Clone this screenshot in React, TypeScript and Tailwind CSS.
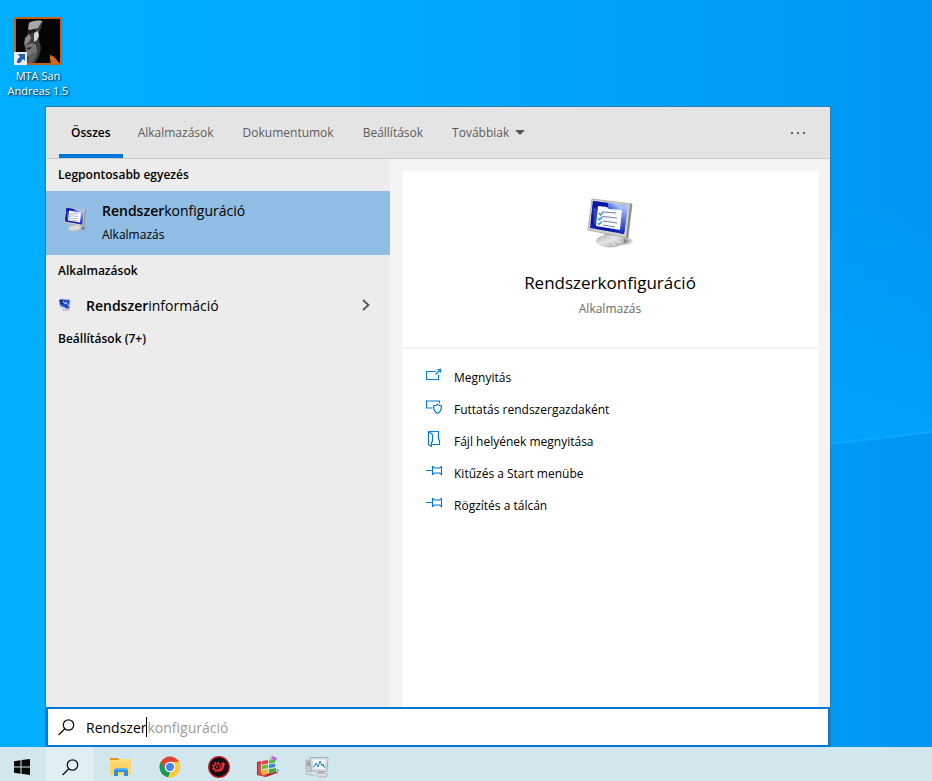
import type { ReactNode } from "react";

const TABS = ["Alkalmazások", "Dokumentumok", "Beállítások"];

const ACTIONS = [
  { label: "Megnyitás", icon: <OpenIcon /> },
  { label: "Futtatás rendszergazdaként", icon: <AdminIcon /> },
  { label: "Fájl helyének megnyitása", icon: <LocationIcon /> },
  { label: "Kitűzés a Start menübe", icon: <PinIcon /> },
  { label: "Rögzítés a tálcán", icon: <PinIcon /> },
];

const TASKBAR = [
  { label: "Start", icon: <WindowsLogo />, style: "w-[46px] pr-0.5" },
  { label: "Keresés", icon: <SearchIcon />, style: "mr-0.5 w-12 bg-[#dfeff4]" },
  { label: "Fájlkezelő", icon: <FolderIcon />, style: "w-[49px]" },
  { label: "Google Chrome", icon: <ChromeIcon />, style: "w-[49px]" },
  { label: "Driver Booster", icon: <BoosterIcon />, style: "w-[49px]" },
  { label: "Töredezettségmentesítés", icon: <BlocksIcon />, style: "w-[49px]" },
  { label: "Teljesítményfigyelő", icon: <MonitorGraphIcon />, style: "w-[49px]" },
];

function OpenIcon() {
  return (
    <svg width="16" height="16" viewBox="0 0 16 16" fill="none" stroke="#0078d7" strokeWidth="1.200">
      <path d="M9.500 4.500h-9v8h12v-5M9.500 7.500l5.500-5.500M11.500 2.500h3v3" />
    </svg>
  );
}

function AdminIcon() {
  return (
    <svg width="16" height="16" viewBox="0 0 16 16" fill="none" stroke="#0078d7" strokeWidth="1.200">
      <path d="M6.500 9H.5V2h13v2.500" />
      <path d="M11.500 5.500c-1.300 1-2.500 1.300-4 1.300 0 4 .8 6 4 7.700 3.200-1.700 4-3.700 4-7.700-1.500 0-2.700-.3-4-1.300Z" />
    </svg>
  );
}

function LocationIcon() {
  return (
    <svg width="16" height="16" viewBox="0 0 16 16" fill="none" stroke="#0078d7" strokeWidth="1.200">
      <path d="M2.500.5h10v8l1 1v4h-7M2.500.5v13l3 2v-4l1-1v-7l-4-3" />
    </svg>
  );
}

function PinIcon() {
  return (
    <svg width="16" height="16" viewBox="0 0 16 16" fill="none" stroke="#0078d7" strokeWidth="1.200">
      <path d="M0 7.500h6.500M6.500 3v9M6.500 3.500l2 1.500h5l2-1.500v8l-2-1.500h-5l-2 1.500" />
    </svg>
  );
}

function SearchIcon() {
  return (
    <svg width="17" height="17" viewBox="0 0 17 17" fill="none" stroke="#111" strokeWidth="1.300">
      <circle cx="10.500" cy="6" r="5.200" />
      <path d="M6.800 9.700.6 16" />
    </svg>
  );
}

function ConfigIcon({ size }: { size: number }) {
  return (
    <svg width={size} height={size} viewBox="0 0 50 52">
      <defs>
        <linearGradient id="screen" x1="0" y1="1" x2="1" y2="0">
          <stop offset="0" stopColor="#1a2fb4" />
          <stop offset="0.300" stopColor="#0513a6" />
          <stop offset="0.600" stopColor="#2346d2" />
          <stop offset="0.800" stopColor="#a9c4fb" />
          <stop offset="1" stopColor="#6f97f2" />
        </linearGradient>
        <linearGradient id="side" x1="0" y1="0" x2="0" y2="1">
          <stop offset="0" stopColor="#b9cffc" />
          <stop offset="1" stopColor="#0a1fb8" />
        </linearGradient>
        <linearGradient id="stand" x1="0" y1="0" x2="1" y2="1">
          <stop offset="0" stopColor="#a9a9a9" />
          <stop offset="0.450" stopColor="#e4e4e4" />
          <stop offset="1" stopColor="#9c9c9c" />
        </linearGradient>
        <radialGradient id="shade">
          <stop offset="0" stopColor="#555" />
          <stop offset="1" stopColor="#555" stopOpacity="0" />
        </radialGradient>
      </defs>
      <ellipse cx="37" cy="44" rx="12" ry="5" fill="url(#shade)" />
      <path d="M19 35l15 2-1 5H20Z" fill="#b5b5b5" />
      <ellipse cx="25" cy="44" rx="14" ry="6.500" fill="url(#stand)" />
      <path d="M28 42l8 4M26 43l4 6" stroke="#f5f5f5" />
      <path d="M7 2l40 5-4 34L3 33Z" fill="#d2d2cf" stroke="#a2a2a0" strokeWidth="0.800" />
      <path d="M45 7l2 .3-4 33.700-2-1Z" fill="#8c8c8a" />
      <path d="M8 4l35 4-4 29L5 31Z" fill="url(#screen)" />
      <path d="M8 4l15 2v5H13l-2 16-5-1Z" fill="#0817a6" />
      <path d="M36 10l7-2-4 29-5-1Z" fill="url(#side)" />
      <path d="M13 9l9 1 2 2 13 1-2 20-24-4Z" fill="#fafbff" />
      <path d="M19 15l12 1M18 19.500l14 1.500M18 24l14 2M18 28l12 2" stroke="#7c7fa0" />
      <path d="M14 16l1.500 2 3-3.500M13 21l1.500 2 3-3.500M13 26l1 1.500 3-3" fill="none" stroke="#279ad0" strokeWidth="1.300" />
      <path d="M8 12l3-2 3 15-5 3Z" fill="#fff" opacity="0.200" />
    </svg>
  );
}

function InfoIcon() {
  return (
    <svg width="14" height="14" viewBox="0 0 14 14">
      <ellipse cx="8" cy="11.500" rx="4" ry="1.500" fill="#c4c8cf" />
      <path d="M2 1l10 1-1 9-9-2Z" fill="#2547c4" stroke="#9fabca" strokeWidth="0.700" />
      <path d="M5 3l2 3 1-2 3 4" fill="none" stroke="#b9d0ff" />
      <path d="M1 2h4v4H2Z" fill="#1734a0" />
      <path d="M2 8l5 2" stroke="#e6efff" />
    </svg>
  );
}

function GameIcon() {
  return (
    <svg width="48" height="48" viewBox="0 0 48 48">
      <rect x="1" y="1" width="46" height="46" rx="2" fill="#050505" stroke="#c65e16" strokeWidth="2" />
      <path d="M15 6c3-2 8-3 14-2l-2 7-3 6 1 6 2 8-2 8-4 7h-8v-9l-2-6-1-4 3-6 1-7Z" fill="#3e3e3e" />
      <path d="M15 6c3-2 8-3 13-2l-4 7-8 2-2-1Z" fill="#a8a8a8" />
      <path d="M13 14l8-2 1 3-8 2Z" fill="#1b1b1b" />
      <path d="M11 21l4-4 2 4-2 4-5 3Z" fill="#8c8c8c" />
      <path d="M20 16l4-2 1 5-2 4-3 2Z" fill="#d4d4d4" />
      <path d="M11 28l7-2 4 2 1 7-4 6-6-2Z" fill="#757575" />
      <path d="M12 31l6-1-3 3Z" fill="#222" />
      <path d="M15 38l6-3 2 3-5 8h-4Z" fill="#5e5e5e" />
      <path d="M36 38c3 1 4 1 6 4l4 5h-9l-1-5Z" fill="#cd681c" />
      <rect x="0" y="35" width="13" height="13" fill="#eee" />
      <path d="M4 37h7v7l-2-2-3 4H3c0-3 1-5 3-6Z" fill="#275eaf" />
    </svg>
  );
}

function WindowsLogo() {
  return (
    <svg width="16" height="16" viewBox="0 0 16 16" fill="#080808">
      <path d="M0 2.200 6.500 1.300v6.200H0ZM7.500 1.100 16 0v7.500H7.500ZM0 8.500h6.500v6.200L0 13.800ZM7.500 8.500H16V16l-8.500-1.200Z" />
    </svg>
  );
}

function FolderIcon() {
  return (
    <svg width="22" height="20" viewBox="0 0 22 20">
      <path d="M0 1h8l2 2H0Z" fill="#d99c16" />
      <path d="M0 3h9l1-1h11v16H0Z" fill="#ffdc7b" />
      <path d="M0 5h21v13H0Z" fill="#ffd667" />
      <path d="M4 19v-6l2-2h10l2 2v6h-4v-4H8v4Z" fill="#2e91df" />
      <path d="M6 11h10l2 2H4Z" fill="#55b1f0" />
    </svg>
  );
}

function ChromeIcon() {
  return (
    <svg width="22" height="22" viewBox="0 0 48 48">
      <circle cx="24" cy="24" r="23" fill="#f8cc3c" />
      <path d="M4.100 12.500A23 23 0 0 1 43.900 12.500H24L14 29.800Z" fill="#dc4437" />
      <path d="M4.100 12.500 14.500 30 24 35.500 20 46.600A23 23 0 0 1 4.100 12.500Z" fill="#169a58" />
      <circle cx="24" cy="24" r="11.500" fill="#fff" />
      <circle cx="24" cy="24" r="9" fill="#4587ee" />
    </svg>
  );
}

function BoosterIcon() {
  return (
    <svg width="22" height="22" viewBox="0 0 22 22">
      <circle cx="11" cy="11" r="10.300" fill="#111" stroke="#cf2027" strokeWidth="1.300" />
      <circle cx="9" cy="11" r="3.200" fill="none" stroke="#ed2e35" strokeWidth="1.300" />
      <circle cx="9" cy="11" r="4.500" fill="none" stroke="#ed2e35" strokeWidth="1.500" strokeDasharray="2 1.530" />
      <path d="M9.500 12.500c3 1 4-1 4-3.500h-2L15 5.500 18.500 9h-2c0 4-2.500 7-6 7" fill="#ed2e35" stroke="#111" strokeWidth="0.500" />
      <circle cx="9" cy="11" r="1" fill="#ed2e35" />
    </svg>
  );
}

function BlocksIcon() {
  return (
    <svg width="22" height="22" viewBox="0 0 22 22">
      <path d="M0 6l4-1v12l5 1 10-3 1 2-11 4-9-2Z" fill="#b3202c" />
      <path d="M1 7l3-1v11l6 2v2l-9-2Z" fill="#e0484a" />
      <path d="M5 5l6-1v4l-6 1Z" fill="#e8403e" />
      <path d="M5 9.500l6-1v4l-6 1Z" fill="#62bb35" />
      <path d="M5 14l6-1v5l-6 1Z" fill="#f3b22c" />
      <path d="M12 4l6-1v4l-6 1Z" fill="#5cb83a" />
      <path d="M12 3.500l2-1.500 5 .5-1 1-6 1Z" fill="#a4df7b" />
      <path d="M12 8.500l6-1v4l-6 1Z" fill="#3f7fd8" />
      <path d="M12 13l7-1v4l-7 2Z" fill="#4aa838" />
      <path d="M5 9l6-1M5 13.500l6-1M12 8l6-1M12 12.500l6-1" stroke="#e3f3da" strokeWidth="0.700" />
      <path d="M15 0l5 2-1 3-5-2Z" fill="#bd64df" />
      <path d="M19 17l2-1v2Z" fill="#d85ac3" />
      <path d="M20 13l2 1-1 2-1-1Z" fill="#259ddd" />
    </svg>
  );
}

function MonitorGraphIcon() {
  return (
    <svg width="24" height="22" viewBox="0 0 24 22">
      <path d="M1 4l5 1v11l-5-1Z" fill="#c9ccce" stroke="#9b9fa1" strokeWidth="0.700" />
      <path d="M2 7h3M2 9h3" stroke="#777a7c" />
      <path d="M13 15h6v4h-6Z" fill="#afb2b4" />
      <ellipse cx="17" cy="19" rx="6" ry="2" fill="#d9dcde" stroke="#a2a7aa" strokeWidth="0.600" />
      <path d="M5 1.500h18l-1 14L6.500 15Z" fill="#e3e6e7" stroke="#9ba0a2" strokeWidth="0.800" />
      <path d="M7 3h14l-.5 11L8 13Z" fill="#f3fafe" stroke="#b7c3ca" strokeWidth="0.600" />
      <path d="M8 11l2-1 1-3 2 4 2-6 2 5 1-2 1 3h1.500" fill="none" stroke="#2787be" />
      <path d="M1 17l8 2-1 1-8-2Z" fill="#b2b7ba" />
    </svg>
  );
}

function ListHeading({ children }: { children: ReactNode }) {
  return <h2 className="flex h-8 items-center px-3 text-[12px] leading-4 font-semibold">{children}</h2>;
}

function SearchHeader() {
  return (
    <header className="flex h-[52px] shrink-0 justify-between border-b border-[#cbcbcb] bg-[#e4e4e4] pr-[25px] pl-[13px] text-[12px] text-[#5c5c5c]">
      <nav className="flex gap-px">
        <button className="border-b-4 border-[#0078d7] px-3 pt-1 font-semibold text-black">Összes</button>
        {TABS.map((tab) => (
          <button key={tab} className="px-3.5">
            {tab}
          </button>
        ))}
        <button className="flex items-center gap-1.5 px-3.5">
          Továbbiak
          <svg width="10" height="5" viewBox="0 0 10 5" fill="#555">
            <path d="M0 0h10L5 5Z" />
          </svg>
        </button>
      </nav>
      <button aria-label="További lehetőségek" className="flex items-center gap-1">
        <span className="size-0.5 bg-[#606060]" />
        <span className="size-0.5 bg-[#606060]" />
        <span className="size-0.5 bg-[#606060]" />
      </button>
    </header>
  );
}

function ResultList() {
  return (
    <section className="w-[344px] shrink-0 bg-[#ececec]">
      <ListHeading>Legpontosabb egyezés</ListHeading>
      <button className="flex h-16 w-full items-start gap-3.5 bg-[#8fbde4] px-4 text-left">
        <span className="pt-[15px]">
          <ConfigIcon size={26} />
        </span>
        <span className="pt-2">
          <span className="block text-[14px] leading-6">
            <b className="font-semibold">Rendszer</b>konfiguráció
          </span>
          <span className="block text-[12px] leading-6">Alkalmazás</span>
        </span>
      </button>
      <ListHeading>Alkalmazások</ListHeading>
      <button className="flex h-9 w-full items-center px-3 text-left text-[14px]">
        <InfoIcon />
        <span className="ml-3.5 flex-1">
          <b className="font-semibold">Rendszer</b>információ
        </span>
        <svg className="mr-2" width="8" height="12" viewBox="0 0 8 12" fill="none" stroke="#555" strokeWidth="1.800">
          <path d="M1 1l5.500 5L1 11" />
        </svg>
      </button>
      <ListHeading>Beállítások (7+)</ListHeading>
    </section>
  );
}

function Details() {
  return (
    <section className="flex flex-1 flex-col bg-[#f4f4f4] px-3 pt-3">
      <div className="flex h-[178px] flex-col items-center border-b-2 border-[#f2f2f2] bg-white pt-[26px]">
        <ConfigIcon size={52} />
        <h1 className="mt-5 text-[17px] leading-7">Rendszerkonfiguráció</h1>
        <p className="text-[12px] leading-6 text-[#6b6b6b]">Alkalmazás</p>
      </div>
      <div className="flex-1 bg-white pt-3">
        {ACTIONS.map(({ label, icon }) => (
          <button key={label} className="flex h-8 w-full items-center gap-3 px-6 text-left text-[12px]">
            <span className="mb-1">{icon}</span>
            <span className="pt-px">{label}</span>
          </button>
        ))}
      </div>
    </section>
  );
}

function SearchBox() {
  return (
    <label className="flex h-10 shrink-0 items-center border-2 border-[#0078d7] bg-white px-2.5 text-[14px]">
      <SearchIcon />
      <input
        aria-label="Keresés"
        defaultValue="Rendszer"
        className="ml-[11px] [field-sizing:content] caret-transparent outline-none"
      />
      <span className="h-5 w-px bg-black" />
      <span className="text-[#9b9b9b]">konfiguráció</span>
    </label>
  );
}

export default function App() {
  return (
    <div className="relative flex min-h-screen flex-col bg-linear-to-r from-[#00aeff] via-[#00a8fc] to-[#0096f3] font-['Open_Sans','Noto_Sans',sans-serif] text-black">
      {/* Light beam on the wallpaper */}
      <svg
        className="absolute inset-0 size-full"
        viewBox="0 0 932 781"
        preserveAspectRatio="none"
        aria-hidden="true"
      >
        <defs>
          <linearGradient id="glow" x1="0" y1="0" x2="0" y2="1">
            <stop offset="0" stopColor="#00a8ff" stopOpacity="0" />
            <stop offset="1" stopColor="#00a8ff" stopOpacity="0.700" />
          </linearGradient>
        </defs>
        <path d="M830 200H932V432L830 444Z" fill="url(#glow)" />
        <path d="M830 444L932 432" stroke="#1cb0ff" strokeWidth="2" opacity="0.500" />
      </svg>

      <div className="relative h-[106px] shrink-0 px-1 pt-[17px]">
        <button className="flex w-[68px] flex-col items-center text-[11px] leading-[15px] text-white [text-shadow:1px_1px_2px_#000]">
          <GameIcon />
          <span className="mt-[3px] block whitespace-nowrap">MTA San</span>
          <span className="block whitespace-nowrap">Andreas 1.5</span>
        </button>
      </div>

      <main className="relative mr-[101px] ml-[45px] flex flex-1 flex-col border-x border-t border-[#2b7faf]">
        <SearchHeader />
        <div className="flex flex-1">
          <ResultList />
          <Details />
        </div>
        <SearchBox />
      </main>

      <footer className="relative flex h-[34px] shrink-0 bg-[#d2e6ee]">
        {TASKBAR.map(({ label, icon, style }) => (
          <button key={label} aria-label={label} className={`flex items-center justify-center pt-1.5 ${style}`}>
            {icon}
          </button>
        ))}
      </footer>
    </div>
  );
}
